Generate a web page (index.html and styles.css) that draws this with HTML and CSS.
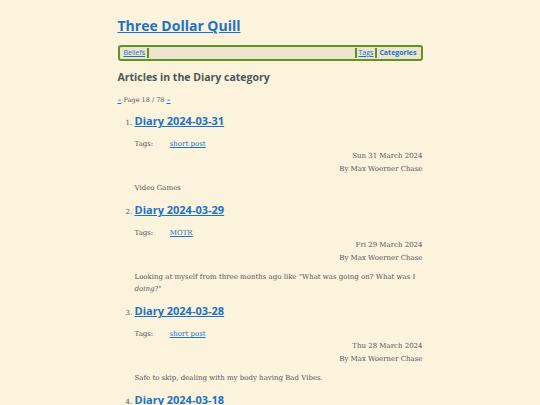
FILE: index.html
```html
<html lang="en">
<head>
    <meta charset="UTF-8">
    <title>Articles in the Diary category - Three Dollar Quill</title>
    <link rel="stylesheet" href="styles.css">
</head>
<body>
<div class="page">
    <header>
        <h1><a href="#">Three Dollar Quill</a></h1>
        <nav class="menu">
            <a href="#">Beliefs</a>
            <span class="spacer"></span>
            <a href="#">Tags</a>
            <a href="#" class="current">Categories</a>
        </nav>
    </header>

    <h2>Articles in the Diary category</h2>
    <p class="pager"><a href="#">&laquo;</a> Page 18 / 78 <a href="#">&raquo;</a></p>

    <ol class="articles">
        <li>
            <h3><a href="#">Diary 2024-03-31</a></h3>
            <div class="tags"><span class="label">Tags:</span> <a href="#">short post</a></div>
            <div class="meta">Sun 31 March 2024</div>
            <div class="meta">By Max Woerner Chase</div>
            <p class="summary">Video Games</p>
        </li>
        <li>
            <h3><a href="#">Diary 2024-03-29</a></h3>
            <div class="tags"><span class="label">Tags:</span> <a href="#">MOTR</a></div>
            <div class="meta">Fri 29 March 2024</div>
            <div class="meta">By Max Woerner Chase</div>
            <p class="summary">Looking at myself from three months ago like "What was going on? What was I <em>doing</em>?"</p>
        </li>
        <li>
            <h3><a href="#">Diary 2024-03-28</a></h3>
            <div class="tags"><span class="label">Tags:</span> <a href="#">short post</a></div>
            <div class="meta">Thu 28 March 2024</div>
            <div class="meta">By Max Woerner Chase</div>
            <p class="summary">Safe to skip, dealing with my body having Bad Vibes.</p>
        </li>
        <li>
            <h3><a href="#">Diary 2024-03-18</a></h3>
            <div class="tags"><span class="label">Tags:</span> <a href="#">short post</a></div>
            <div class="meta">Mon 18 March 2024</div>
            <div class="meta">By Max Woerner Chase</div>
            <p class="summary">Nothing much.</p>
        </li>
    </ol>
</div>
</body>
</html>
```

FILE: styles.css
```css
*{
    box-sizing: border-box;
}

html{
    --bg: #fbf3dc;
    --nav-bg: #ece4cf;
    --green: #5f9420;
    --link: #1b72c7;
    --text: #555555;
    --heading: #4b5858;
}

body{
    margin: 0;
    background: var(--bg);
    color: var(--text);
    font-family: "DejaVu Serif", serif;
    font-size: 7px;
}

.page{
    width: 305px;
    margin: 0 auto;
    padding-top: 15px;
}

a{ color: var(--link); }

h1{
    margin: 0;
    font-family: "Open Sans", sans-serif;
    font-size: 14px;
    font-weight: 700;
    line-height: 22px;
}

.menu{
    display: flex;
    align-items: center;
    margin-top: 8px;
    height: 16px;
    padding: 0 2px;
    background: var(--nav-bg);
    border: 2px solid var(--green);
    border-radius: 3px;
    font-family: "Open Sans", sans-serif;
    font-size: 7px;
}

.menu a{
    padding: 0 2px;
    line-height: 10px;
}

.menu .spacer{
    flex: 1;
    align-self: stretch;
    margin: 1px 0;
    border-left: 2px solid var(--green);
    border-right: 2px solid var(--green);
}

.menu .current{
    font-weight: 700;
    text-decoration: none;
    border-left: 2px solid var(--green);
}

h2{
    margin: 7px 0 0;
    font-family: "Open Sans", sans-serif;
    font-size: 10.5px;
    font-weight: 700;
    line-height: 18px;
    color: var(--heading);
}

.pager{
    margin: 9px 0 0;
    font-size: 6.5px;
    line-height: 10px;
}

.articles{
    margin: 8px 0 0;
    padding-left: 17px;
}

.articles li{
    padding-bottom: 8px;
}

h3{
    margin: 0;
    font-family: "Open Sans", sans-serif;
    font-size: 11px;
    font-weight: 700;
    line-height: 16px;
}

.tags{
    margin-top: 9px;
    line-height: 12px;
}

.tags .label{
    display: inline-block;
    width: 33px;
}

.meta{
    text-align: right;
    line-height: 12.5px;
}

.summary{
    margin: 7px 0 0;
    line-height: 12px;
}
```
